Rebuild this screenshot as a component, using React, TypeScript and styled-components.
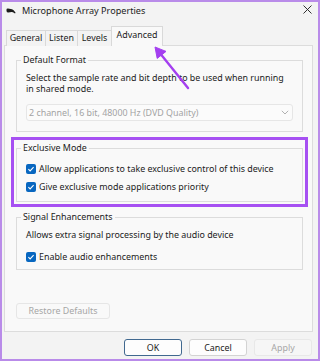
import styled, { createGlobalStyle } from "styled-components";

const GlobalStyle = createGlobalStyle`
  body {
    margin: 0;
    font-family: "Noto Sans", "Open Sans", sans-serif;
  }
`;

const Frame = styled.div`
  position: relative;
  width: 320px;
  height: 361px;
  box-sizing: border-box;
  border: 2px solid #b98be9;
  background: #f3f3f3;
  display: flex;
  flex-direction: column;
  font-size: 8.9px;
  color: #1b1b1b;
`;

const TitleBar = styled.div`
  height: 18px;
  display: flex;
  align-items: center;
  padding: 0 6px 0 4px;
`;

const Title = styled.span`
  margin-left: 6px;
  flex: 1;
  font-size: 9.1px;
  line-height: 12px;
`;

const CloseButton = styled.svg`
  width: 9px;
  height: 9px;
  margin-top: -3px;
`;

const TabRow = styled.div`
  display: flex;
  align-items: flex-end;
  height: 20px;
  margin-top: 6px;
  margin-bottom: -1px;
  padding-left: 4px;
`;

const Tab = styled.div<{ $w: number; $active?: boolean }>`
  box-sizing: border-box;
  width: ${(p) => p.$w}px;
  height: ${(p) => (p.$active ? 20 : 16)}px;
  margin-left: -1px;
  border: 1px solid #d9d9d9;
  border-bottom: none;
  background: ${(p) => (p.$active ? "#f9f9f9" : "#f3f3f3")};
  display: flex;
  align-items: center;
  justify-content: center;
  padding-bottom: ${(p) => (p.$active ? 3 : 1)}px;
  line-height: 12px;
  position: ${(p) => (p.$active ? "relative" : "static")};
  z-index: ${(p) => (p.$active ? 1 : 0)};
  &:first-child {
    margin-left: 0;
  }
`;

const Panel = styled.div`
  box-sizing: border-box;
  height: 287px;
  margin: 0 5px 0 2px;
  border: 1px solid #dcdcdc;
  background: #f9f9f9;
  display: flex;
  flex-direction: column;
  align-items: flex-start;
`;

const Group = styled.fieldset<{ $mt: number; $ml: number; $pb: number }>`
  box-sizing: border-box;
  width: 287px;
  min-width: 0;
  margin: ${(p) => p.$mt}px 0 0 ${(p) => p.$ml}px;
  padding: 0 9px ${(p) => p.$pb}px 9px;
  border: 1px solid #dcdcdc;
`;

const Legend = styled.legend`
  padding: 0 2px;
  margin-left: -5px;
  line-height: 12px;
`;

const Text = styled.div<{ $mt: number; $lh?: number }>`
  margin-top: ${(p) => p.$mt}px;
  line-height: ${(p) => p.$lh ?? 12}px;
`;

const Select = styled.div`
  box-sizing: border-box;
  height: 17px;
  margin-top: 10px;
  border: 1px solid #e6e6e6;
  border-radius: 3px;
  background: #fbfbfb;
  color: #a3a3a3;
  display: flex;
  align-items: center;
  justify-content: space-between;
  padding: 0 3px 0 2px;
  line-height: 12px;
`;

const Highlight = styled.div`
  box-sizing: border-box;
  width: 297px;
  margin: 5px 0 0 6px;
  padding: 2px;
  border: 3px solid #a650f2;
`;

const CheckRow = styled.div<{ $mt: number }>`
  display: flex;
  align-items: center;
  gap: 3px;
  margin-top: ${(p) => p.$mt}px;
  height: 12px;
  line-height: 12px;
`;

const Box = styled.span`
  width: 10px;
  height: 10px;
  border-radius: 2px;
  background: #0867c0;
  display: flex;
  align-items: center;
  justify-content: center;
  flex-shrink: 0;
`;

const Button = styled.div<{ $w: number; $default?: boolean; $disabled?: boolean }>`
  box-sizing: border-box;
  width: ${(p) => p.$w}px;
  height: 17px;
  border: 1px solid
    ${(p) => (p.$default ? "#40688f" : p.$disabled ? "#e8e8e8" : "#d3d3d3")};
  border-radius: 3px;
  background: ${(p) => (p.$disabled ? "#f6f6f6" : "#fdfdfd")};
  color: ${(p) => (p.$disabled ? "#a6a6a6" : "#1b1b1b")};
  display: flex;
  align-items: center;
  justify-content: center;
  line-height: 12px;
`;

const RestoreButton = styled(Button)`
  margin: 33px 0 0 11px;
  height: 16px;
  background: #f9f9f9;
  border-color: #e6e6e6;
`;

const Footer = styled.div`
  display: flex;
  justify-content: flex-end;
  gap: 7px;
  margin-top: 7px;
  padding-right: 6px;
`;

const ArrowOverlay = styled.svg`
  position: absolute;
  left: -2px;
  top: -2px;
  width: 320px;
  height: 361px;
  pointer-events: none;
  z-index: 5;
`;

const Check = () => (
  <Box>
    <svg width="8" height="8" viewBox="0 0 8 8">
      <path d="M1.4 4.2 L3.1 5.9 L6.6 2.2" fill="none" stroke="#fff" strokeWidth="1.1" />
    </svg>
  </Box>
);

export default function App() {
  return (
    <>
      <GlobalStyle />
      <Frame>
        <TitleBar>
          <svg width="10" height="7" viewBox="0 0 10 7">
            <path d="M0.5 1.5 Q0.5 0.3 2 0.4 L6 1.2 Q7.5 1.6 9.6 4.8 L9 5.6 Q7 3.6 5.5 4 L2.5 4.6 Q0.5 4.6 0.5 3 Z" fill="#1b1b1b" />
          </svg>
          <Title>Microphone Array Properties</Title>
          <CloseButton viewBox="0 0 9 9">
            <path d="M0.5 0.5 L8.5 8.5 M8.5 0.5 L0.5 8.5" stroke="#1b1b1b" strokeWidth="0.9" />
          </CloseButton>
        </TitleBar>
        <TabRow>
          <Tab $w={40}>General</Tab>
          <Tab $w={33}>Listen</Tab>
          <Tab $w={35}>Levels</Tab>
          <Tab $w={52} $active>
            Advanced
          </Tab>
        </TabRow>
        <Panel>
          <Group $mt={8} $ml={11} $pb={10}>
            <Legend>Default Format</Legend>
            <Text $mt={6} $lh={11}>
              Select the sample rate and bit depth to be used when running in shared mode.
            </Text>
            <Select>
              <span>2 channel, 16 bit, 48000 Hz (DVD Quality)</span>
              <svg width="8" height="5" viewBox="0 0 8 5">
                <path d="M0.8 0.8 L4 4 L7.2 0.8" fill="none" stroke="#a8a8a8" strokeWidth="0.9" />
              </svg>
            </Select>
          </Group>
          <Highlight>
            <Group $mt={0} $ml={0} $pb={8}>
              <Legend>Exclusive Mode</Legend>
              <CheckRow $mt={9}>
                <Check />
                Allow applications to take exclusive control of this device
              </CheckRow>
              <CheckRow $mt={6}>
                <Check />
                Give exclusive mode applications priority
              </CheckRow>
            </Group>
          </Highlight>
          <Group $mt={4} $ml={11} $pb={6}>
            <Legend>Signal Enhancements</Legend>
            <Text $mt={6}>Allows extra signal processing by the audio device</Text>
            <CheckRow $mt={10}>
              <Check />
              Enable audio enhancements
            </CheckRow>
          </Group>
          <RestoreButton $w={94} $disabled>
            Restore Defaults
          </RestoreButton>
        </Panel>
        <Footer>
          <Button $w={58} $default>
            OK
          </Button>
          <Button $w={58}>Cancel</Button>
          <Button $w={58} $disabled>
            Apply
          </Button>
        </Footer>
        <ArrowOverlay viewBox="0 0 320 361">
          <line x1="188" y1="88" x2="159" y2="52" stroke="#a43ff0" strokeWidth="2.4" strokeLinecap="round" />
          <path d="M155 47 L166 51.4 L157.2 58.4 Z" fill="#a43ff0" stroke="#a43ff0" strokeWidth="1" strokeLinejoin="round" />
        </ArrowOverlay>
      </Frame>
    </>
  );
}
